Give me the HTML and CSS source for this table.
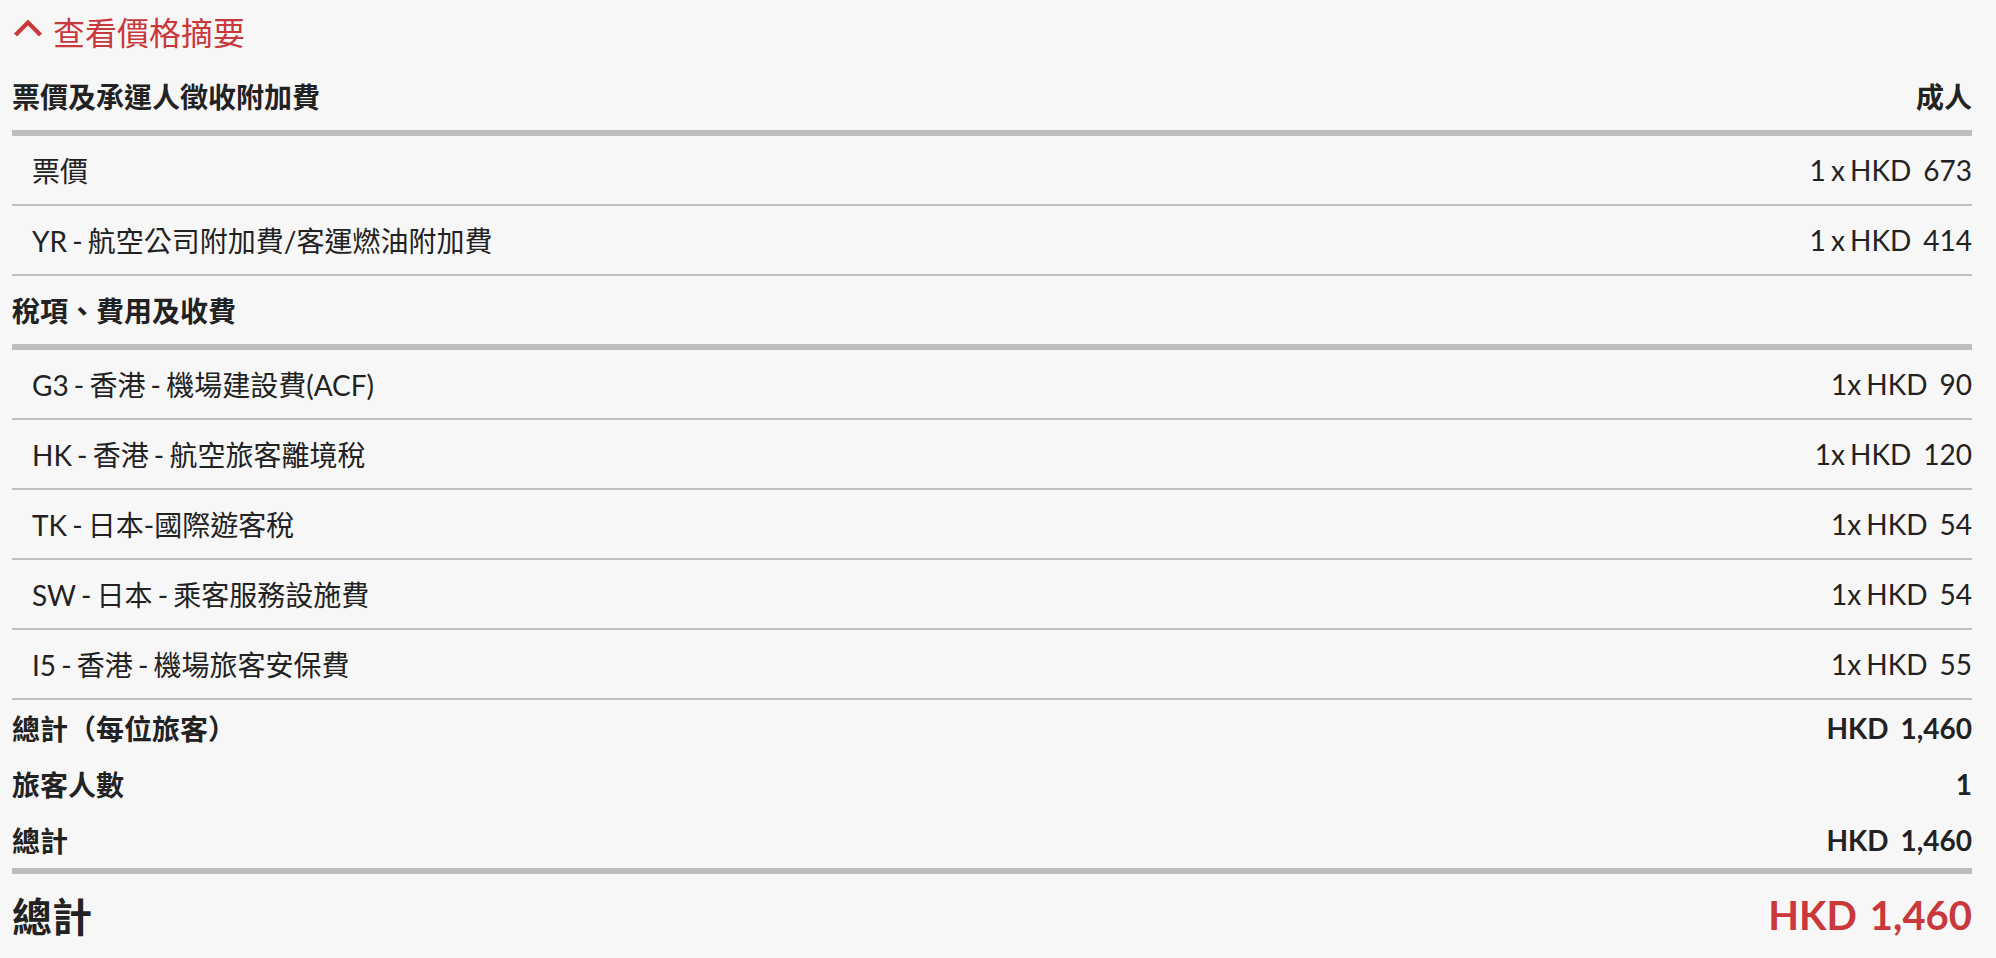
FILE: index.html
```html
<!DOCTYPE html>
<html lang="zh-Hant">
<head>
<meta charset="utf-8">
<title>查看價格摘要</title>
<link rel="stylesheet" href="styles.css">
</head>
<body>
<div class="wrap">
  <div class="toggle">
    <svg class="chev" width="30" height="20" viewBox="0 0 30 20"><path d="M2.5 17 L15 4.5 L27.5 17" fill="none" stroke="currentColor" stroke-width="4.2"/></svg>
    <span>查看價格摘要</span>
  </div>

  <div class="section-head"><span>票價及承運人徵收附加費</span><span>成人</span></div>
  <div class="row"><span>票價</span><span class="amt">1 x HKD<span class="num">673</span></span></div>
  <div class="row"><span>YR - 航空公司附加費/客運燃油附加費</span><span class="amt">1 x HKD<span class="num">414</span></span></div>

  <div class="section-head"><span>稅項、費用及收費</span><span></span></div>
  <div class="row"><span>G3 - 香港 - 機場建設費(ACF)</span><span class="amt">1x HKD<span class="num">90</span></span></div>
  <div class="row"><span>HK - 香港 - 航空旅客離境稅</span><span class="amt">1x HKD<span class="num">120</span></span></div>
  <div class="row"><span>TK - 日本-國際遊客稅</span><span class="amt">1x HKD<span class="num">54</span></span></div>
  <div class="row"><span>SW - 日本 - 乘客服務設施費</span><span class="amt">1x HKD<span class="num">54</span></span></div>
  <div class="row"><span>I5 - 香港 - 機場旅客安保費</span><span class="amt">1x HKD<span class="num">55</span></span></div>

  <div class="sum-row"><span>總計（每位旅客）</span><span>HKD<span class="num">1,460</span></span></div>
  <div class="sum-row"><span>旅客人數</span><span>1</span></div>
  <div class="sum-row last"><span>總計</span><span>HKD<span class="num">1,460</span></span></div>

  <div class="grand"><span>總計</span><span class="grand-amt">HKD<span class="num">1,460</span></span></div>
</div>
</body>
</html>
```

FILE: styles.css
```css
html, body {
  margin: 0;
  padding: 0;
  background: #f7f7f7;
}
body {
  font-family: "Lato", "Noto Sans CJK TC", sans-serif;
  color: #222222;
}
.wrap {
  padding: 0 24px 0 12px;
}
.toggle {
  height: 62px;
  display: flex;
  align-items: center;
  gap: 10px;
  color: #c9383b;
  font-size: 32px;
  padding-left: 1px;
}
.chev {
  display: block;
  margin-top: -6px;
}
.section-head {
  height: 68px;
  display: flex;
  align-items: center;
  justify-content: space-between;
  font-size: 28px;
  font-weight: 700;
  border-bottom: 6px solid #bdbdbd;
}
.row {
  height: 68px;
  display: flex;
  align-items: center;
  justify-content: space-between;
  font-size: 28px;
  word-spacing: -2px;
  padding-left: 20px;
  border-bottom: 2px solid #c0c0c0;
}
.num {
  margin-left: 12px;
}
.sum-row {
  height: 56px;
  display: flex;
  align-items: center;
  justify-content: space-between;
  font-size: 28px;
  font-weight: 700;
}
.sum-row.last {
  border-bottom: 6px solid #bdbdbd;
}
.grand {
  height: 82px;
  display: flex;
  align-items: center;
  justify-content: space-between;
  font-size: 40px;
  font-weight: 700;
}
.grand .num {
  margin-left: 13px;
}
.grand-amt {
  color: #c9383b;
}
```
